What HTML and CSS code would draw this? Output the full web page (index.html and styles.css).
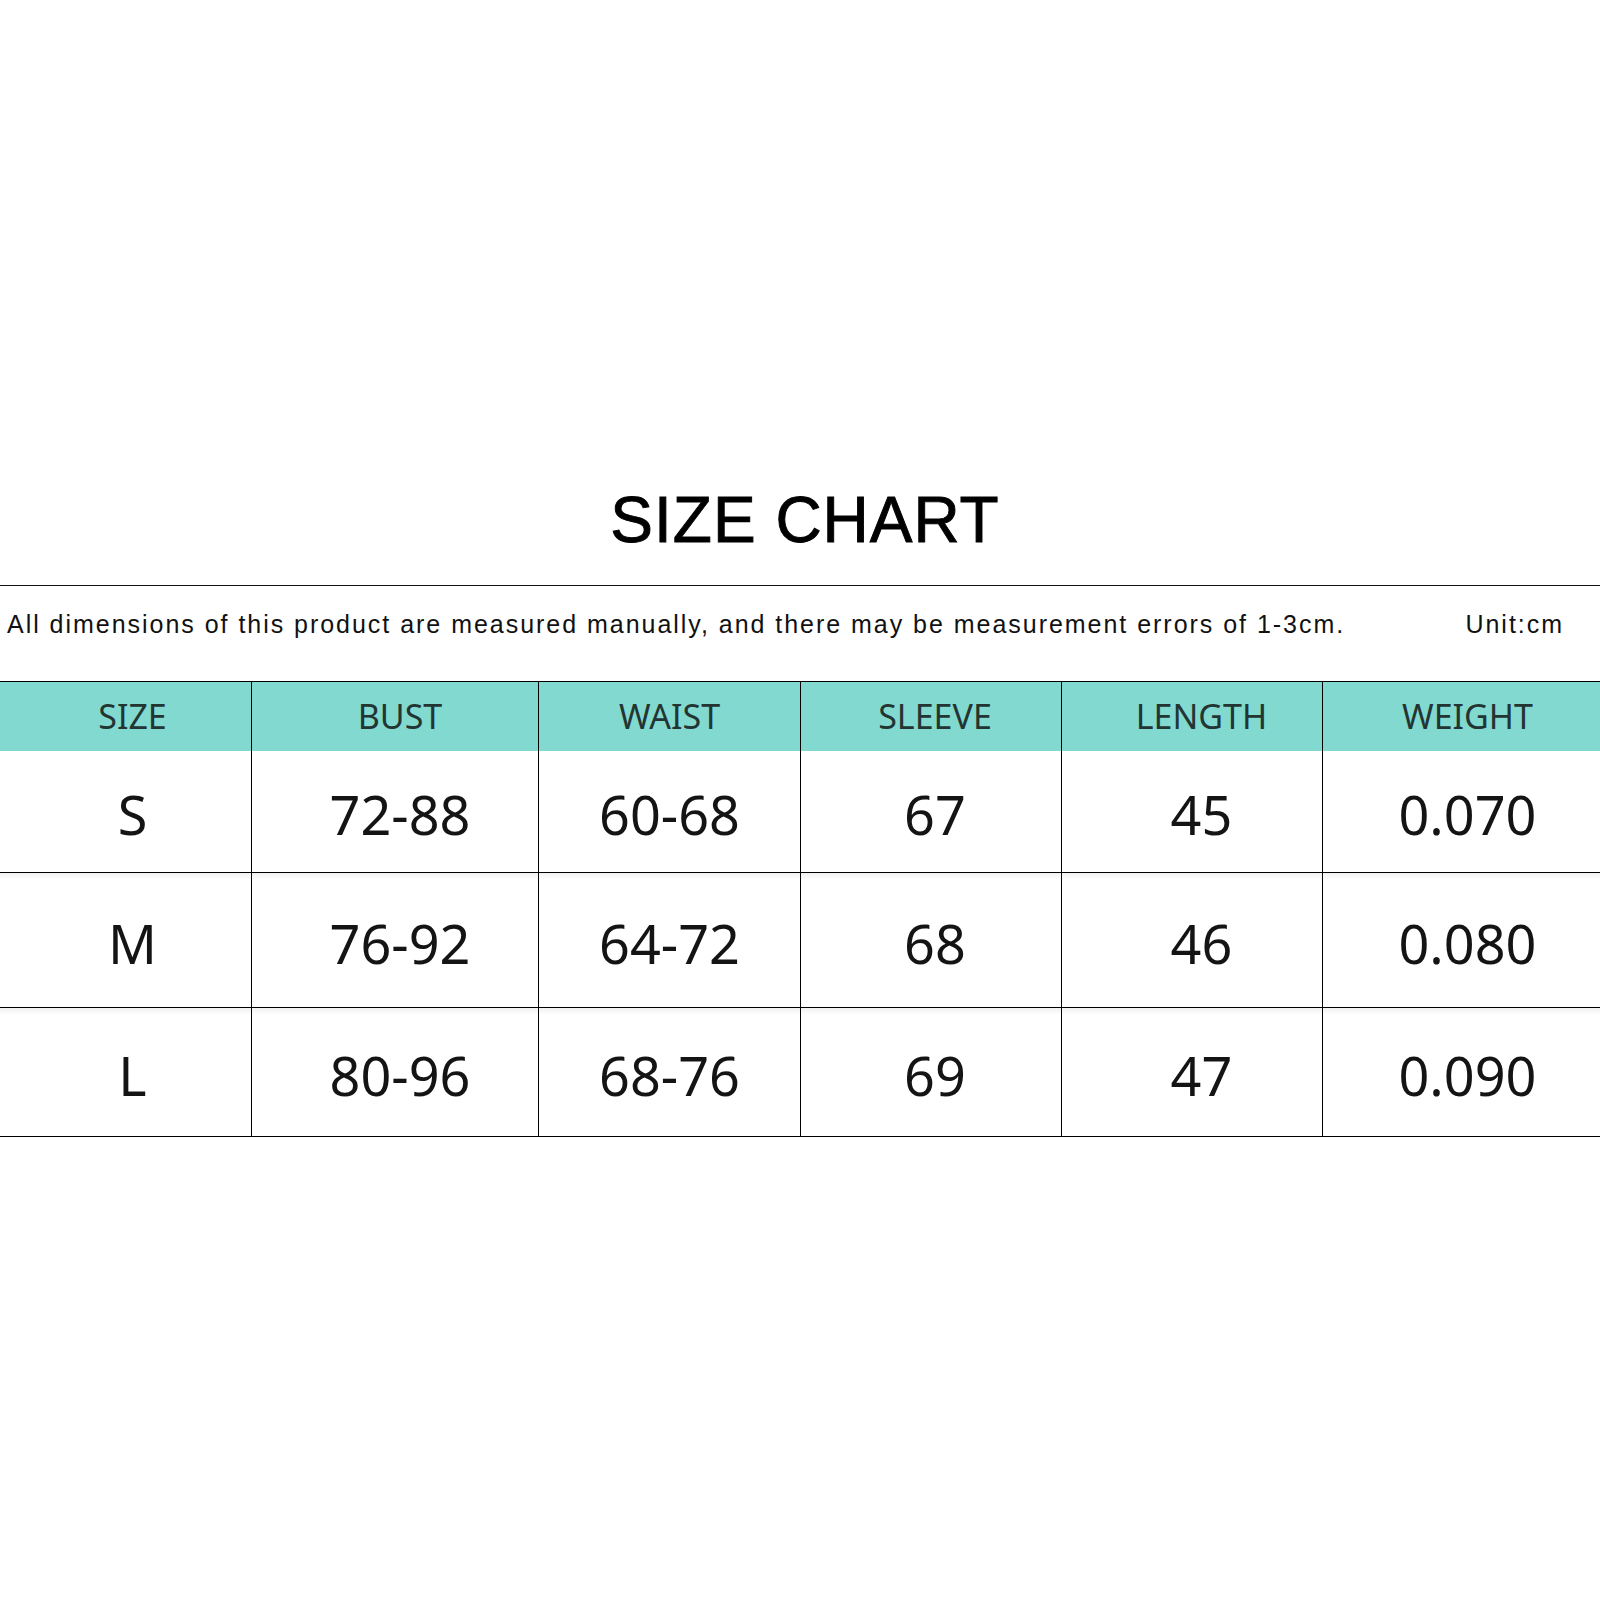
FILE: index.html
```html
<!DOCTYPE html>
<html lang="en">
<head>
<meta charset="utf-8">
<title>Size Chart</title>
<link rel="stylesheet" href="styles.css">
</head>
<body>
<div class="page">
  <h1 class="title">SIZE CHART</h1>
  <div class="rule"></div>
  <div class="note">
    <span class="note-text">All dimensions of this product are measured manually, and there may be measurement errors of 1-3cm.</span>
    <span class="unit">Unit:cm</span>
  </div>
  <div class="chart">
    <div class="cell head">SIZE</div>
    <div class="cell head">BUST</div>
    <div class="cell head">WAIST</div>
    <div class="cell head">SLEEVE</div>
    <div class="cell head">LENGTH</div>
    <div class="cell head">WEIGHT</div>

    <div class="cell data">S</div>
    <div class="cell data">72-88</div>
    <div class="cell data">60-68</div>
    <div class="cell data">67</div>
    <div class="cell data">45</div>
    <div class="cell data">0.070</div>

    <div class="cell data shade">M</div>
    <div class="cell data shade">76-92</div>
    <div class="cell data shade">64-72</div>
    <div class="cell data shade">68</div>
    <div class="cell data shade">46</div>
    <div class="cell data shade">0.080</div>

    <div class="cell data shade">L</div>
    <div class="cell data shade">80-96</div>
    <div class="cell data shade">68-76</div>
    <div class="cell data shade">69</div>
    <div class="cell data shade">47</div>
    <div class="cell data shade">0.090</div>
  </div>
</div>
</body>
</html>
```

FILE: styles.css
```css
html, body {
  margin: 0;
  padding: 0;
  background: #ffffff;
}

.page {
  width: 1600px;
  padding-top: 488px;
  font-family: "Liberation Sans", Arial, sans-serif;
  color: #000;
}

.title {
  margin: 0;
  padding-left: 10px;
  font-family: "Liberation Sans", Arial, sans-serif;
  font-size: 64px;
  line-height: 64px;
  font-weight: 400;
  letter-spacing: 1px;
  -webkit-text-stroke: 0.9px #000;
  text-align: center;
  color: #000;
}

.rule {
  margin-top: 33px;
  height: 1px;
  background: #111;
}

.note {
  margin-top: 26px;
  display: flex;
  justify-content: space-between;
  padding: 0 36px 0 7px;
  font-size: 25px;
  line-height: 25px;
  letter-spacing: 1.97px;
  color: #111;
  white-space: nowrap;
}

.chart {
  margin-top: 44px;
  border-top: 1px solid #000;
  display: grid;
  grid-template-columns: 251px 287px 262px 261px 261px 1fr;
  grid-template-rows: 69px 122px 135px 129px;
  font-family: "Noto Sans", "Open Sans", sans-serif;
}

.cell {
  box-sizing: border-box;
  display: flex;
  align-items: center;
  justify-content: center;
  border-left: 1px solid #000;
}

.cell:nth-child(6n+1) {
  border-left: none;
  padding-left: 14px;
}

.cell:nth-child(6n+2) {
  padding-left: 10px;
}

.cell:nth-child(6n+4) {
  padding-left: 8px;
}

.cell:nth-child(6n+5) {
  padding-left: 19px;
}

.cell:nth-child(6n) {
  padding-left: 12px;
}

.head {
  background: #82d9cf;
  font-size: 34px;
  color: #223532;
  padding-bottom: 1px;
}

.data {
  border-bottom: 1px solid #000;
  font-size: 54px;
  color: #141414;
  padding-top: 5px;
}

.shade {
  background: linear-gradient(#f1f1f1, #ffffff 7px);
}
```
